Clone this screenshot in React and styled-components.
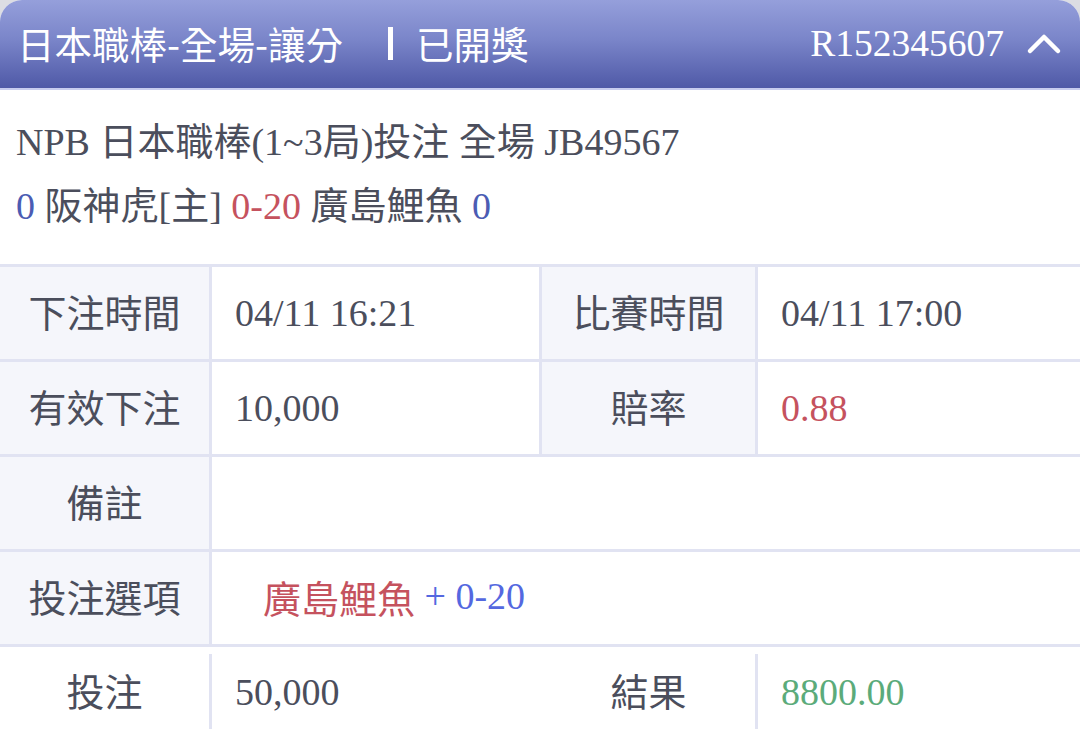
import React from "react";
import styled, { createGlobalStyle } from "styled-components";

const Global = createGlobalStyle`
  html, body { margin: 0; padding: 0; background: #dcdde3; }
  body { font-family: "Liberation Serif", "Noto Sans CJK TC", serif; }
  * { box-sizing: border-box; }
`;

const Card = styled.div`
  width: 1080px;
  height: 733px;
  overflow: hidden;
  background: #ffffff;
  border-radius: 22px 22px 0 0;
  color: #4b4e5c;
`;

const Header = styled.div`
  height: 90px;
  display: flex;
  align-items: center;
  padding: 0 18px 2px 17px;
  background: linear-gradient(180deg, #959fdb 0%, #7a85c9 45%, #4f59a7 100%);
  border-bottom: 2px solid #c7ccef;
  color: #ffffff;
`;

const Title = styled.div`
  font-family: "Noto Sans CJK TC", sans-serif;
  font-size: 37.5px;
  line-height: 1;
  display: flex;
  align-items: center;
  flex: 1;
`;

const Divider = styled.span`
  display: inline-block;
  width: 5px;
  height: 33px;
  background: #ffffff;
  margin: 0 23px 0 45px;
`;

const Code = styled.div`
  font-family: "Liberation Serif", serif;
  font-size: 37.5px;
  display: flex;
  align-items: center;
  gap: 22px;
`;

const Info = styled.div`
  padding: 20px 16px 26px;
  font-size: 38px;
  line-height: 64px;
`;

const Line = styled.div`
  white-space: nowrap;
`;

const Tone = styled.span`
  color: ${(p) =>
    p.$tone === "blue"
      ? "#4b5cb3"
      : p.$tone === "red"
      ? "#c5525e"
      : p.$tone === "bright"
      ? "#5468e0"
      : p.$tone === "green"
      ? "#5bab7a"
      : "inherit"};
`;

const Table = styled.div`
  display: grid;
  grid-template-columns: 209px 327px 213px 1fr;
  grid-auto-rows: 92px;
  gap: 3px;
  background: #e1e3f2;
  border-top: 3px solid #e1e3f2;
  padding-bottom: 3px;
`;

const Label = styled.div`
  background: #f5f6fb;
  display: flex;
  align-items: center;
  justify-content: center;
  font-size: 38px;
  padding-bottom: 6px;
`;

const Value = styled.div`
  background: #ffffff;
  display: flex;
  align-items: center;
  padding-left: ${(p) => (p.$indent ? "51px" : "23px")};
  padding-bottom: ${(p) => (p.$indent ? "4px" : "0")};
  font-size: 38px;
  grid-column: ${(p) => (p.$span ? "2 / 5" : "auto")};
`;

const FootRow = styled.div`
  display: grid;
  grid-template-columns: 209px 327px 213px 1fr;
  column-gap: 3px;
  padding-top: 7px;
  background: #ffffff;
`;

const FootLabel = styled.div`
  height: 75px;
  display: flex;
  align-items: center;
  justify-content: center;
  font-size: 38px;
  padding-bottom: 4px;
`;

const FootValue = styled.div`
  height: 75px;
  display: flex;
  align-items: center;
  padding-left: 23px;
  font-size: 38px;
  border-left: 3px solid #e1e3f2;
  margin-left: -3px;
`;

const Chevron = () => (
  <svg width="36" height="26" viewBox="0 0 36 26" fill="none">
    <polyline
      points="4,21 18,7 32,21"
      stroke="#ffffff"
      strokeWidth="4.5"
      strokeLinecap="round"
      strokeLinejoin="round"
    />
  </svg>
);

export default function App() {
  return (
    <>
      <Global />
      <Card>
        <Header>
          <Title>
            日本職棒-全場-讓分
            <Divider />
            已開獎
          </Title>
          <Code>
            R152345607
            <Chevron />
          </Code>
        </Header>
        <Info>
          <Line>NPB 日本職棒(1~3局)投注 全場 JB49567</Line>
          <Line>
            <Tone $tone="blue">0</Tone> 阪神虎[主] <Tone $tone="red">0-20</Tone> 廣島鯉魚{" "}
            <Tone $tone="blue">0</Tone>
          </Line>
        </Info>
        <Table>
          <Label>下注時間</Label>
          <Value>04/11 16:21</Value>
          <Label>比賽時間</Label>
          <Value>04/11 17:00</Value>

          <Label>有效下注</Label>
          <Value>10,000</Value>
          <Label>賠率</Label>
          <Value>
            <Tone $tone="red">0.88</Tone>
          </Value>

          <Label>備註</Label>
          <Value $span />

          <Label>投注選項</Label>
          <Value $span $indent>
            <Tone $tone="red">廣島鯉魚</Tone>&nbsp;<Tone $tone="bright">+ 0-20</Tone>
          </Value>
        </Table>
        <FootRow>
          <FootLabel>投注</FootLabel>
          <FootValue>50,000</FootValue>
          <FootLabel>結果</FootLabel>
          <FootValue>
            <Tone $tone="green">8800.00</Tone>
          </FootValue>
        </FootRow>
      </Card>
    </>
  );
}
